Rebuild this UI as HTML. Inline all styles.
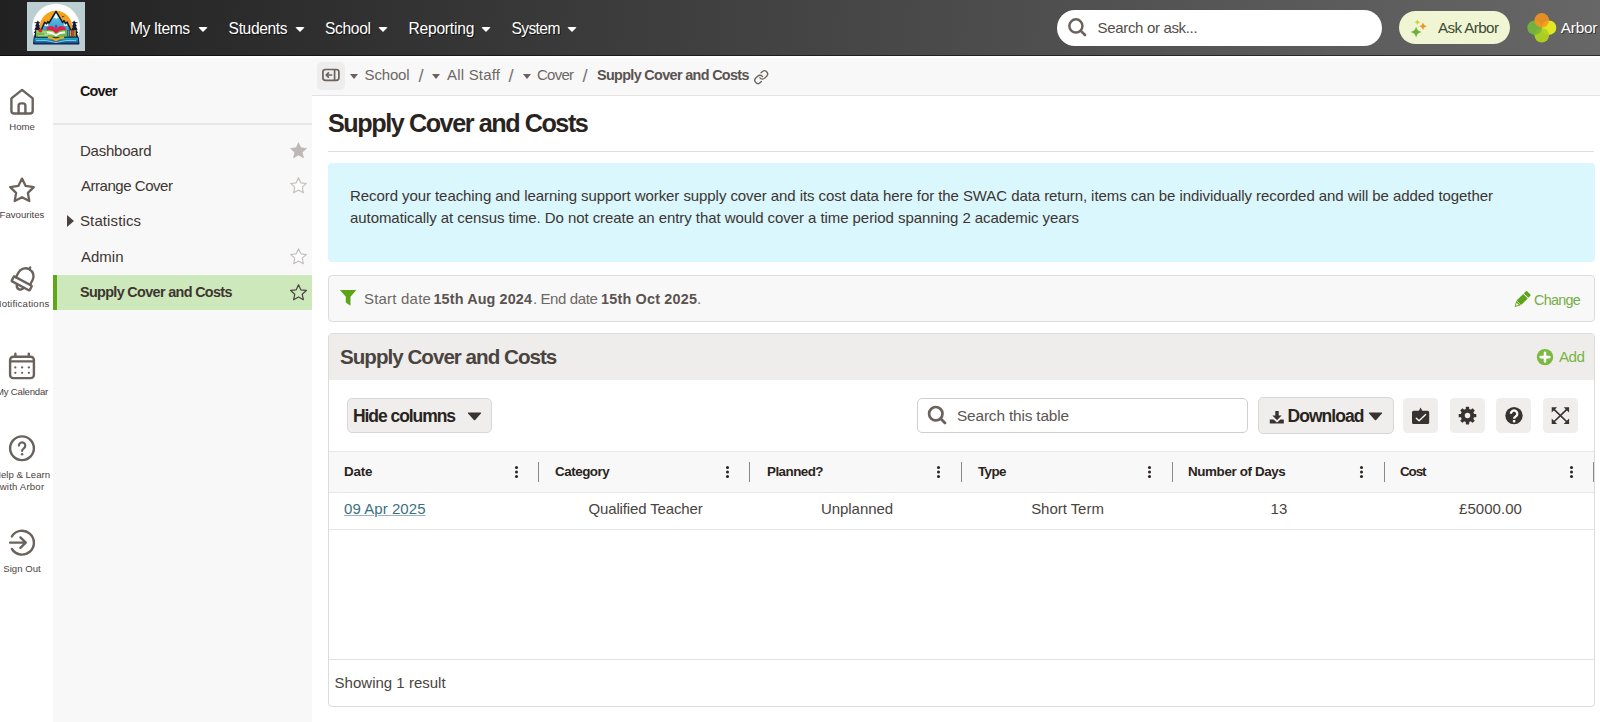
<!DOCTYPE html>
<html lang="en">
<head>
<meta charset="utf-8">
<title>Supply Cover and Costs</title>
<style>
*{box-sizing:border-box;margin:0;padding:0}
html,body{width:1600px;height:722px;overflow:hidden;background:#fff}
body{font-family:"Liberation Sans",sans-serif;color:#3d3531;position:relative;font-size:15px}
.abs{position:absolute;white-space:nowrap}
svg{display:block}

/* ---------- top bar ---------- */
#topbar{position:absolute;left:0;top:0;width:1600px;height:56px;background:linear-gradient(93deg,#212121 0%,#676767 100%);border-bottom:1px solid rgba(0,0,0,.55)}
#logo{position:absolute;left:27px;top:1.5px;width:58px;height:49.3px;background:#bbcfd3;overflow:hidden}
.nav{position:absolute;top:18px;height:22px;line-height:22px;font-size:15.6px;color:#fff;text-shadow:1px 1px 0 #111;white-space:nowrap}
.nav i{position:absolute;top:9px;width:0;height:0;border-left:5px solid transparent;border-right:5px solid transparent;border-top:5px solid #fff;border-radius:2px}
#gsearch{position:absolute;left:1057px;top:10px;width:325px;height:36px;border-radius:18px;background:#fff}
#gsearch span{position:absolute;left:41px;top:0;line-height:36px;font-size:15px;color:#544d49}
#ask{position:absolute;left:1399px;top:11px;width:111px;height:33px;border-radius:17px;background:#f0f5d3}
#ask span{position:absolute;left:39px;top:0;line-height:33px;font-size:15.2px;color:#3d4a35}
#arbor{position:absolute;left:1561px;top:17px;line-height:22px;font-size:15.4px;color:#fff;text-shadow:1px 1px 0 #333}

/* ---------- icon rail ---------- */
#rail{position:absolute;left:0;top:56px;width:53px;height:666px;background:#fff;overflow:hidden}
.rl{position:absolute;left:-19px;width:82px;text-align:center;font-size:9.6px;line-height:12px;color:#4a423f;white-space:nowrap}
.ri{position:absolute}
#r3{letter-spacing:.2px}#r4{letter-spacing:-.22px}#r7{letter-spacing:.19px}

/* ---------- side menu ---------- */
#side{position:absolute;left:53px;top:56px;width:259px;height:666px;background:#f8f8f8}
#side::before,#crumbs::before{content:"";position:absolute;left:0;top:0;width:100%;height:2px;background:#fff}
#side .hd{position:absolute;left:28px;top:25px;font-weight:bold;font-size:14.4px;line-height:20px;color:#1c1613}
#side .dv{position:absolute;left:0;top:67px;width:259px;height:2px;background:#e9e7e6}
.mi{position:absolute;left:0;width:259px;height:35px;line-height:35px;padding-left:28px;font-size:15px;color:#3d3531;white-space:nowrap}
.mi.sel{background:#cde8bb;font-weight:bold;border-left:4px solid #5fa61a;padding-left:24px;font-size:14.4px}
.mi svg{position:absolute;left:237px;top:9.7px}
.mi.sel svg{left:233px}
.tri{position:absolute;left:14px;top:12px;width:0;height:0;border-top:6.2px solid transparent;border-bottom:6.2px solid transparent;border-left:7px solid #4a4440}

/* ---------- main ---------- */
#crumbs{position:absolute;left:312px;top:56px;width:1288px;height:40px;background:#f8f8f8;border-bottom:1px solid #e3e3e3}
#crumbs .b{position:absolute;left:5px;top:6px;width:28px;height:28px;border-radius:5px;background:#eeeded}
.cr{position:absolute;top:9px;line-height:20px;font-size:15px;color:#6d6764;white-space:nowrap}
.cr.sl{font-size:18.5px;top:9.5px;color:#7a7471;margin-left:.4px}
.cr.bd{font-weight:bold;color:#5a5350;font-size:14.4px}
.ct{position:absolute;top:18px;width:0;height:0;border-left:4.8px solid transparent;border-right:4.8px solid transparent;border-top:5px solid #6b625d}
h1{position:absolute;left:329px;top:107px;font-size:25.2px;line-height:32px;font-weight:bold;color:#2a2421;white-space:nowrap}
#hr{position:absolute;left:328px;top:151px;width:1266px;height:1px;background:#dedede}
#info{position:absolute;left:328px;top:163px;width:1267px;height:99px;border-radius:4px;background:#d9f7fd}
#info p{position:absolute;left:23px;top:22px;width:1200px;font-size:15px;line-height:22px;color:#3d3531;white-space:nowrap}
#filter{position:absolute;left:328px;top:275px;width:1267px;height:47px;border:1px solid #dcdcdc;border-radius:4px;background:#f8f8f8}
#filter .t{position:absolute;left:36px;top:12px;line-height:22px;font-size:15px;color:#6d6764;white-space:nowrap}
#filter .t b{color:#5a5350;font-size:14.4px}
#filter .chg{position:absolute;left:1206px;top:13px;line-height:22px;font-size:14.4px;color:#76ad45}

#panel{position:absolute;left:328px;top:333px;width:1267px;height:374px;border:1px solid #dcdcdc;border-radius:4px;background:#fff;overflow:hidden}
#phd{position:absolute;left:0;top:0;width:1265px;height:46px;background:#efedec}
#phd .tt{position:absolute;left:12px;top:9px;line-height:28px;font-size:20.6px;font-weight:bold;color:#4a4440;white-space:nowrap}
#phd .add{position:absolute;left:1231px;top:12px;line-height:22px;font-size:15.2px;color:#78b545}
.btn{position:absolute;top:64px;height:35px;border:1px solid #d9d7d5;border-radius:5px;background:#efeeec;font-weight:bold;font-size:17.5px;line-height:34px;color:#2a2421;white-space:nowrap}
.ib{position:absolute;top:64px;width:35px;height:35px;border-radius:4.5px;background:#efeeec}
#tsearch{position:absolute;left:588px;top:64px;width:331px;height:35px;border:1px solid #cfcfcf;border-radius:5px;background:#fff}
#tsearch span{position:absolute;left:40px;top:0;line-height:33px;font-size:15.4px;color:#5c5652}
#thead{position:absolute;left:0;top:117px;width:1265px;height:42px;background:#f8f8f8;border-top:1px solid #e6e6e6;border-bottom:1px solid #e6e6e6}
.th{position:absolute;top:10px;line-height:20px;font-size:13.4px;font-weight:bold;color:#2a2421;white-space:nowrap}
.sep{position:absolute;top:10px;width:1px;height:20px;background:#8d8885}
.dots{position:absolute;top:14px;width:3px;height:3px;border-radius:50%;background:#2a2421;box-shadow:0 4.5px 0 #2a2421,0 9px 0 #2a2421}
#row{position:absolute;left:0;top:159px;width:1265px;height:37px;border-bottom:1px solid #e6e6e6}
.td{position:absolute;top:5px;line-height:22px;font-size:15px;color:#4a4440;white-space:nowrap}
.td.c{text-align:center;width:211px}
.td a{color:#3b7082;text-decoration:underline;text-decoration-color:#9db3ba;text-decoration-thickness:1px}
#foot{position:absolute;left:0;top:325px;width:1265px;height:48px;border-top:1px solid #e3e3e3}
#foot span{position:absolute;left:6px;top:12px;line-height:22px;font-size:15px;color:#4a4440}
</style>
<style id="fit">
#n1{letter-spacing:-0.464px;margin-left:-1.00px}
#n2{letter-spacing:-0.366px;margin-left:-0.40px}
#n3{letter-spacing:-0.338px;margin-left:-1.00px}
#n4{letter-spacing:-0.203px;margin-left:-0.60px}
#n5{letter-spacing:-0.600px;margin-left:-0.60px}
#gst{letter-spacing:-0.337px;margin-left:-0.40px}
#askt{letter-spacing:-0.605px;margin-left:0.00px}
#arbor{letter-spacing:-0.285px;margin-left:-0.20px}
#shd{letter-spacing:-0.824px;margin-left:-1.00px}
#m1{letter-spacing:-0.234px;margin-left:-1.00px}
#m2{letter-spacing:-0.463px;margin-left:0.00px}
#m3{letter-spacing:0.108px;margin-left:-1.00px}
#m4{letter-spacing:-0.008px;margin-left:0.00px}
#m5{letter-spacing:-0.659px;margin-left:-1.00px}
#c1{letter-spacing:-0.175px;margin-left:-0.40px}
#c2{letter-spacing:0.197px;margin-left:0.00px}
#c3{letter-spacing:-0.754px;margin-left:-1.00px}
#c4{letter-spacing:-0.659px;margin-left:0.00px}
#h1{letter-spacing:-1.440px;margin-left:-1.00px}
#l1{letter-spacing:-0.071px;margin-left:-1.00px}
#l2{letter-spacing:-0.067px;margin-left:-1.00px}
#f1{letter-spacing:0.203px;margin-left:-1.00px}
#f2{letter-spacing:0.121px;margin-left:-0.50px}
#f3{letter-spacing:-0.406px;margin-left:1.00px}
#f4{letter-spacing:0.200px;margin-left:-1.00px}
#chg{letter-spacing:-0.724px;margin-left:-1.00px}
#ptt{letter-spacing:-0.988px;margin-left:-1.00px}
#add{letter-spacing:-0.516px;margin-left:-1.00px}
#hct{letter-spacing:-1.064px;margin-left:-2.00px}
#tst{letter-spacing:-0.166px;margin-left:-1.00px}
#dlt{letter-spacing:-0.959px;margin-left:-1.50px}
#th1{letter-spacing:-0.177px;margin-left:-1.00px}
#th2{letter-spacing:-0.472px;margin-left:-1.00px}
#th3{letter-spacing:-0.538px;margin-left:0.00px}
#th4{letter-spacing:-0.588px;margin-left:0.00px}
#th5{letter-spacing:-0.379px;margin-left:-1.00px}
#th6{letter-spacing:-1.088px;margin-left:0.00px}
#td1{letter-spacing:0.059px;margin-left:-1.00px}
#td2{letter-spacing:-0.138px;margin-left:0.00px}
#td3{letter-spacing:-0.040px;margin-left:1.00px}
#td4{letter-spacing:-0.039px;margin-left:0.00px}
#td5{letter-spacing:0.062px;margin-left:1.00px}
#td6{letter-spacing:0.024px;margin-left:0.00px}
#ftt{letter-spacing:0.006px;margin-left:-0.40px}
</style>
</head>
<body>

<div id="topbar">
  <div id="logo"><svg width="58" height="50" viewBox="27 1 58 50" style="margin-top:-1px">
<defs><linearGradient id="mg" x1="0" y1="0" x2="0" y2="1"><stop offset="0" stop-color="#6fd0e8"/><stop offset="1" stop-color="#1f86c0"/></linearGradient>
<linearGradient id="bg2" x1="0" y1="0" x2="0" y2="1"><stop offset="0" stop-color="#2fb6c6"/><stop offset="0.55" stop-color="#1b7fb3"/><stop offset="1" stop-color="#15306e"/></linearGradient></defs>
<rect x="27" y="1" width="58" height="50" fill="#bbcfd3"/>
<clipPath id="lc"><rect x="27" y="1" width="58" height="41"/></clipPath><circle cx="56" cy="27.6" r="23.9" fill="#fff" clip-path="url(#lc)"/>
<circle cx="56" cy="27" r="16.2" fill="#f5a31d"/>
<path d="M38 20.5 l1.6 3 l-1 0 l1.6 3 l-1.1 0 l1.8 3.4 l-1.2 0 l1.6 3.4 l-1 4 h-6.5 l1.2 -4.4 l-1.2 0 l1.8 -3.2 l-1.4 0 l2 -3.4 l-1.2 0 l1.6 -3 l-1 0 z M74 20.5 l-1.6 3 l1 0 l-1.6 3 l1.1 0 l-1.8 3.4 l1.2 0 l-1.6 3.4 l1 4 h6.5 l-1.2 -4.4 l1.2 0 l-1.8 -3.2 l1.4 0 l-2 -3.4 l1.2 0 l-1.6 -3 l1 0 z" fill="#161b33"/>
<path d="M34.6 22.6 h5.4 M72 22.6 h5.4" stroke="#161b33" stroke-width="0.8"/>
<path d="M61.5 15.6 l1.6 0.9 l1.8 -1 l-1.4 1.6 l-1 0.1 z" fill="#161b33"/>
<path d="M38 37.5 L44.6 22.2 L46.6 24 L47.8 21.6 L49 23 L56 11.3 L62.6 22.4 L64 20.6 L65.6 23.6 L67.2 22 L74 37.5 Z" fill="url(#mg)" stroke="#141a35" stroke-width="1.5" stroke-linejoin="round"/>
<path d="M56 13.6 L53.2 18.4 L55 17.6 L56.2 19.2 L57.6 17.6 L59 18.6 Z" fill="#fff"/>
<path d="M45 23.8 l1.6 1.2 l1 -1.6 l0.8 2.6 l-3.8 0 z M66.8 23.6 l-1.2 1.4 l-1.4 -1.8 l-0.6 2.4 l3.6 0.4 z" fill="#fff"/>
<rect x="36" y="30" width="40" height="7.2" fill="#6cbb47"/>
<path d="M37 32 h18 M44 34.2 h14 M38 36 h10" stroke="#c8eaa4" stroke-width="1"/>
<path d="M56 24.2 l1.3 2.6 l-1.3 2 l-1.3 -2 z" fill="#6a35b5"/>
<path d="M46.8 27.6 Q51.6 24 56 29 Q60.4 24 65.4 27.6 L65.8 30.4 Q60.4 28.8 56 33.4 Q51.6 28.8 46.4 30.4 Z" fill="#e01f4b"/>
<path d="M47 31.6 Q52 30.8 56 34.8 Q60 30.8 65 31.6 L65 33.6 Q60 33 56 36.6 Q52 33 47 33.6 Z" fill="#fff"/>
<circle cx="40.3" cy="30.7" r="1.9" fill="#e0222f"/>
<rect x="67.4" y="30" width="7.8" height="6.6" fill="#1b2140"/>
<rect x="67.8" y="30.3" width="1.6" height="6" fill="#3d9be0"/><rect x="69.9" y="30.3" width="1.5" height="6" fill="#f39a1e"/><rect x="71.9" y="30.3" width="1.4" height="6" fill="#e23b2e"/><rect x="73.6" y="30.3" width="1.2" height="6" fill="#e8a21c"/>
<path d="M34.2 37.2 H48 Q52.5 37.6 56 40.8 Q59.5 37.6 64 37.2 H78.2 L79 44 H33.6 Z" fill="url(#bg2)" stroke="#141a4a" stroke-width="1" stroke-linejoin="round"/>
<path d="M48 36.4 Q52.6 36.2 56 39.4 Q59.4 36.2 64 36.4 L64.2 38.6 Q59.6 38.4 56 41.4 Q52.4 38.4 47.8 38.6 Z" fill="#f6a81c"/>
<path d="M36 40.6 Q46 39.4 56 42.6 Q66 39.4 76 40.6" stroke="#8fe0ea" stroke-width="0.8" fill="none"/>
</svg></div>
  <div class="nav" style="left:131px"><span id="n1">My Items</span><i style="left:67px"></i></div>
  <div class="nav" style="left:229px"><span id="n2">Students</span><i style="left:66px"></i></div>
  <div class="nav" style="left:326px"><span id="n3">School</span><i style="left:52px"></i></div>
  <div class="nav" style="left:409px"><span id="n4">Reporting</span><i style="left:72px"></i></div>
  <div class="nav" style="left:512px"><span id="n5">System</span><i style="left:55px"></i></div>
  <div id="gsearch"><svg style="position:absolute;left:10px;top:7px" width="22" height="22" viewBox="1067 17 22 22"><circle cx="1075.9" cy="25.9" r="6.55" fill="none" stroke="#6b625d" stroke-width="2.5"/><path d="M1080.8 30.8 L1085 35" stroke="#6b625d" stroke-width="2.6" stroke-linecap="round"/></svg><span id="gst">Search or ask...</span></div>
  <div id="ask"><svg style="position:absolute;left:8px;top:6px" width="24" height="24" viewBox="1407 17 24 24"><path d="M1416.1 26.4 Q1416.98 31.02 1421.6 31.9 Q1416.98 32.78 1416.1 37.4 Q1415.2199999999998 32.78 1410.6 31.9 Q1415.2199999999998 31.02 1416.1 26.4Z" fill="#6ab23b"/><path d="M1423 22.3 Q1423.64 25.66 1427 26.3 Q1423.64 26.94 1423 30.3 Q1422.36 26.94 1419 26.3 Q1422.36 25.66 1423 22.3Z" fill="#f5912c"/><path d="M1417.4 19.6 Q1417.832 21.868000000000002 1420.1000000000001 22.3 Q1417.832 22.732 1417.4 25.0 Q1416.968 22.732 1414.7 22.3 Q1416.968 21.868000000000002 1417.4 19.6Z" fill="#c5d92d"/></svg><span id="askt">Ask Arbor</span></div>
  <svg id="arblogo" style="position:absolute;left:1526px;top:12px" width="32" height="32" viewBox="1526 12 32 32"><circle cx="1549" cy="27.7" r="7.3" fill="#dfe822"/><circle cx="1541.8" cy="35.3" r="7.3" fill="#b0d51e" fill-opacity="0.92"/><circle cx="1534.6" cy="27.7" r="7.3" fill="#76b83a" fill-opacity="0.9"/><circle cx="1541.8" cy="20.3" r="7.3" fill="#f7941d" fill-opacity="0.88"/></svg>
  <div id="arbor">Arbor</div>
</div>

<div id="rail">
<svg class="ri" style="left:0;top:0" width="53" height="666" viewBox="0 56 53 666" fill="none" stroke="#6b625d" stroke-width="2.4" stroke-linecap="round" stroke-linejoin="round">
<path d="M11.4 98.4 L22.05 89.9 L32.7 98.4 V110.7 Q32.7 113.5 29.9 113.5 H14.2 Q11.4 113.5 11.4 110.7 Z"/>
<path d="M18.6 113.3 V105.8 Q18.6 103.4 21 103.4 H23 Q25.4 103.4 25.4 105.8 V113.3"/>
<polygon points="22.00,178.60 25.64,185.98 33.79,187.17 27.90,192.92 29.29,201.03 22.00,197.20 14.71,201.03 16.10,192.92 10.21,187.17 18.36,185.98" stroke-width="2.3"/>
<g transform="translate(1.6 0.4) rotate(28 22.8 278)" stroke-width="2.4"><path d="M22.8 265.6 V267.4"/><path d="M14.8 281 V275.6 a8 8 0 0 1 16 0 V281"/><rect x="12.6" y="281" width="20.4" height="5.4" rx="0.8"/><path d="M19.2 286.6 a3.6 3.6 0 0 0 7.2 0"/></g>
<rect x="10.1" y="356.7" width="23.8" height="21.4" rx="3.2"/><path d="M10.1 361.4 H33.9 M15.4 353.6 V356.5 M28.8 353.6 V356.5"/>
<g fill="#6b625d" stroke="none"><circle cx="15.3" cy="367.4" r="1.15"/><circle cx="22.1" cy="367.4" r="1.15"/><circle cx="28.9" cy="367.4" r="1.15"/><circle cx="15.3" cy="372.8" r="1.15"/><circle cx="22.1" cy="372.8" r="1.15"/><circle cx="28.9" cy="372.8" r="1.15"/></g>
<circle cx="22" cy="448.25" r="11.9"/>
<path d="M18.9 445.6 a3.2 3.2 0 1 1 4.9 2.7 c-1.2 0.8 -1.7 1.4 -1.7 2.7" stroke-width="2.2"/><circle cx="22.1" cy="454.2" r="1.3" fill="#6b625d" stroke="none"/>
<path d="M11.9 536.4 A11.9 11.9 0 1 1 11.9 549"/><path d="M10.1 542.6 H25.8 M20.4 537.4 L25.8 542.6 L20.4 547.8"/>
</svg>
  <div class="rl" style="top:65px"><span id="r1">Home</span></div>
  <div class="rl" style="top:153px"><span id="r2">Favourites</span></div>
  <div class="rl" style="top:242px"><span id="r3">Notifications</span></div>
  <div class="rl" style="top:330px"><span id="r4">My Calendar</span></div>
  <div class="rl" style="top:413px"><span id="r5">Help &amp; Learn</span><br><span id="r7">with Arbor</span></div>
  <div class="rl" style="top:507px"><span id="r6">Sign Out</span></div>
</div>

<div id="side">
  <div class="hd" id="shd">Cover</div>
  <div class="dv"></div>
  <div class="mi" style="top:77px"><span id="m1">Dashboard</span><svg width="17" height="17" style="top:9px"><polygon points="8.50,0.70 10.79,5.84 16.39,6.44 12.21,10.21 13.38,15.71 8.50,12.90 3.62,15.71 4.79,10.21 0.61,6.44 6.21,5.84" fill="#bdb8b6" stroke="#bdb8b6" stroke-width="0.8" stroke-linejoin="round"/></svg></div>
  <div class="mi" style="top:112px"><span id="m2">Arrange Cover</span><svg width="17" height="17" style="top:9px"><polygon points="8.50,0.70 10.79,5.84 16.39,6.44 12.21,10.21 13.38,15.71 8.50,12.90 3.62,15.71 4.79,10.21 0.61,6.44 6.21,5.84" fill="#fff" stroke="#c2bdbb" stroke-width="1.1" stroke-linejoin="round"/></svg></div>
  <div class="mi" style="top:147px"><span id="m3">Statistics</span><i class="tri"></i></div>
  <div class="mi" style="top:183px"><span id="m4">Admin</span><svg width="17" height="17" style="top:9px"><polygon points="8.50,0.70 10.79,5.84 16.39,6.44 12.21,10.21 13.38,15.71 8.50,12.90 3.62,15.71 4.79,10.21 0.61,6.44 6.21,5.84" fill="#fff" stroke="#c2bdbb" stroke-width="1.1" stroke-linejoin="round"/></svg></div>
  <div class="mi sel" style="top:218.6px;height:35.3px;line-height:35px"><span id="m5">Supply Cover and Costs</span><svg width="17" height="17" style="top:9px"><polygon points="8.50,0.70 10.79,5.84 16.39,6.44 12.21,10.21 13.38,15.71 8.50,12.90 3.62,15.71 4.79,10.21 0.61,6.44 6.21,5.84" fill="none" stroke="#4a4440" stroke-width="1.2" stroke-linejoin="round"/></svg></div>
</div>

<div id="crumbs">
  <div class="b"><svg width="28" height="28" viewBox="317 62 28 28" fill="none" stroke="#6b625d" stroke-width="1.7" stroke-linecap="round" stroke-linejoin="round"><rect x="322.9" y="69.5" width="16" height="10.9" rx="2.6"/><path d="M334.6 69.8 V80.2 M326.3 75 H331.6 M328.4 72.8 L326.2 75 L328.4 77.2"/></svg></div>
  <i class="ct" style="left:38px"></i><div class="cr" id="c1" style="left:53px">School</div>
  <div class="cr sl" id="s1" style="left:106px">/</div>
  <i class="ct" style="left:120px"></i><div class="cr" id="c2" style="left:135px">All Staff</div>
  <div class="cr sl" id="s2" style="left:196px">/</div>
  <i class="ct" style="left:211px"></i><div class="cr" id="c3" style="left:226px">Cover</div>
  <div class="cr sl" id="s3" style="left:270px">/</div>
  <div class="cr bd" id="c4" style="left:285px">Supply Cover and Costs</div>
  <svg style="position:absolute;left:441px;top:13px" width="17" height="17" viewBox="753 69 17 17" fill="none" stroke="#6b625d" stroke-width="2.1" stroke-linecap="round" stroke-linejoin="round"><g transform="translate(753.55 69.5) scale(0.638)"><path d="M10 13a5 5 0 0 0 7.54.54l3-3a5 5 0 0 0-7.07-7.07l-1.72 1.71"/><path d="M14 11a5 5 0 0 0-7.54-.54l-3 3a5 5 0 0 0 7.07 7.07l1.71-1.71"/></g></svg>
</div>

<h1 id="h1">Supply Cover and Costs</h1>
<div id="hr"></div>

<div id="info"><p><span id="l1">Record your teaching and learning support worker supply cover and its cost data here for the SWAC data return, items can be individually recorded and will be added together</span><br><span id="l2">automatically at census time. Do not create an entry that would cover a time period spanning 2 academic years</span></p></div>

<div id="filter">
  <svg style="position:absolute;left:10px;top:13px" width="18" height="18" viewBox="339 289 18 18"><path d="M339.9 289.9 H356.4 L350.5 296.8 V305.8 L345.8 302.5 V296.8 Z" fill="#5ea418"/></svg>
  <div class="t" id="ft"><span id="f1" style="position:absolute;left:0">Start date </span><b id="f2" style="position:absolute;left:69px">15th Aug 2024</b><span id="f3" style="position:absolute;left:167px">. End date </span><b id="f4" style="position:absolute;left:237px">15th Oct 2025</b><span id="f5" style="position:absolute;left:332px">.</span></div>
  <svg style="position:absolute;left:1184px;top:14px" width="19" height="19" viewBox="1513 290 19 19"><g transform="rotate(45 1521.7 299.9)" fill="#5ea418"><path d="M1518.50 293.70 V291.10 Q1518.50 289.90 1519.70 289.90 H1523.70 Q1524.90 289.90 1524.90 291.10 V293.70 Z"/><rect x="1518.50" y="294.60" width="6.4" height="9.30"/><path d="M1518.50 304.30 H1524.90 L1521.7 309.90 Z"/><path d="M1520.10 305.50 H1523.30 L1521.7 308.10 Z" fill="#f8f8f8"/></g></svg>
  <div class="chg" id="chg">Change</div>
</div>

<div id="panel">
  <div id="phd"><div class="tt" id="ptt">Supply Cover and Costs</div><svg style="position:absolute;left:1207px;top:14px" width="18" height="18" viewBox="1536 348 18 18"><circle cx="1545" cy="357.1" r="8.2" fill="#7ab83f"/><path d="M1540.6 357.1 H1549.4 M1545 352.7 V361.5" stroke="#fff" stroke-width="2.6" stroke-linecap="round"/></svg><div class="add" id="add">Add</div></div>
  <div class="btn" id="hide" style="left:18px;width:145px;padding-left:7px"><span id="hct">Hide columns</span><svg style="position:absolute;left:119px;top:13px" width="15" height="9" viewBox="0 0 15 9"><path d="M1.6 0.4 H13.4 Q14.8 0.4 13.9 1.5 L8.2 7.9 Q7.5 8.6 6.8 7.9 L1.1 1.5 Q0.2 0.4 1.6 0.4 Z" fill="#3a322f"/></svg></div>
  <div id="tsearch"><svg style="position:absolute;left:9px;top:6px" width="22" height="22" viewBox="927 405 22 22"><circle cx="935.8" cy="413.7" r="6.7" fill="none" stroke="#6b625d" stroke-width="2.7"/><path d="M940.8 418.8 L945 423" stroke="#6b625d" stroke-width="2.8" stroke-linecap="round"/></svg><span id="tst">Search this table</span></div>
  <div class="btn" id="dl" style="left:929px;width:136px;padding-left:30px;top:63px;height:37px;line-height:36px"><svg style="position:absolute;left:10px;top:12px" width="16" height="14" viewBox="1269 410 16 14"><path d="M1275.3 411 H1278.7 V415.6 H1281.6 L1277 420.2 L1272.4 415.6 H1275.3 Z" fill="#3a322f"/><path d="M1269.8 419.6 H1273.6 L1277 422.4 L1280.4 419.6 H1283.8 V423.4 H1269.8 Z" fill="#3a322f"/></svg><span id="dlt">Download</span><svg style="position:absolute;left:109px;top:14px" width="15" height="9" viewBox="0 0 15 9"><path d="M1.6 0.4 H13.4 Q14.8 0.4 13.9 1.5 L8.2 7.9 Q7.5 8.6 6.8 7.9 L1.1 1.5 Q0.2 0.4 1.6 0.4 Z" fill="#3a322f"/></svg></div>
  <div class="ib" style="left:1074px"><svg width="35" height="35" viewBox="1403 398 35 35"><path d="M1413.6 410.8 H1418.9 L1420.6 407.4 L1422.3 410.8 H1427.6 Q1429.2 410.8 1429.2 412.4 V422.4 Q1429.2 424 1427.6 424 H1413.6 Q1412 424 1412 422.4 V412.4 Q1412 410.8 1413.6 410.8 Z" fill="#3a322f"/><path d="M1416.3 418.2 L1419.1 420.8 L1425.6 414.6" fill="none" stroke="#fff" stroke-width="1.4" stroke-linecap="round" stroke-linejoin="round"/></svg></div>
  <div class="ib" style="left:1121px"><svg width="35" height="35" viewBox="1450 398 35 35"><rect x="1465.8" y="406.8" width="3.4" height="4" rx="0.6" transform="rotate(0 1467.5 415.6)" fill="#3a322f"/><rect x="1465.8" y="406.8" width="3.4" height="4" rx="0.6" transform="rotate(45 1467.5 415.6)" fill="#3a322f"/><rect x="1465.8" y="406.8" width="3.4" height="4" rx="0.6" transform="rotate(90 1467.5 415.6)" fill="#3a322f"/><rect x="1465.8" y="406.8" width="3.4" height="4" rx="0.6" transform="rotate(135 1467.5 415.6)" fill="#3a322f"/><rect x="1465.8" y="406.8" width="3.4" height="4" rx="0.6" transform="rotate(180 1467.5 415.6)" fill="#3a322f"/><rect x="1465.8" y="406.8" width="3.4" height="4" rx="0.6" transform="rotate(225 1467.5 415.6)" fill="#3a322f"/><rect x="1465.8" y="406.8" width="3.4" height="4" rx="0.6" transform="rotate(270 1467.5 415.6)" fill="#3a322f"/><rect x="1465.8" y="406.8" width="3.4" height="4" rx="0.6" transform="rotate(315 1467.5 415.6)" fill="#3a322f"/><circle cx="1467.5" cy="415.6" r="4.75" fill="none" stroke="#3a322f" stroke-width="4"/></svg></div>
  <div class="ib" style="left:1167px"><svg width="35" height="35" viewBox="1496 398 35 35"><circle cx="1514" cy="415.6" r="8.7" fill="#3a322f"/><path d="M1510.9 413.7 a3.2 3.2 0 1 1 4.9 2.7 c-1.2 0.8 -1.7 1.3 -1.7 2.4" fill="none" stroke="#fff" stroke-width="2.3" stroke-linecap="butt"/><rect x="1512.9" y="420" width="2.4" height="2.4" fill="#fff"/></svg></div>
  <div class="ib" style="left:1214px"><svg width="35" height="35" viewBox="1543 398 35 35"><path d="M1553.2 408.7 L1567.6 422.5 M1567.6 408.7 L1553.2 422.5" stroke="#3a322f" stroke-width="1.7"/><path d="M1551.7 407.2 h5.4 l-5.4 5.4z M1569.1 407.2 v5.4 l-5.4 -5.4z M1569.1 424 h-5.4 l5.4 -5.4z M1551.7 424 v-5.4 l5.4 5.4z" fill="#3a322f"/></svg></div>
  <div id="thead">
    <div class="th" style="left:16px" id="th1">Date</div><i class="dots" style="left:185.5px"></i><i class="sep" style="left:209px"></i>
    <div class="th" style="left:227px" id="th2">Category</div><i class="dots" style="left:396.5px"></i><i class="sep" style="left:420px"></i>
    <div class="th" style="left:438px" id="th3">Planned?</div><i class="dots" style="left:607.5px"></i><i class="sep" style="left:632px"></i>
    <div class="th" style="left:649px" id="th4">Type</div><i class="dots" style="left:818.5px"></i><i class="sep" style="left:843px"></i>
    <div class="th" style="left:860px" id="th5">Number of Days</div><i class="dots" style="left:1030.5px"></i><i class="sep" style="left:1054.5px"></i>
    <div class="th" style="left:1071px" id="th6">Cost</div><i class="dots" style="left:1240.5px"></i><i class="sep" style="left:1264px"></i>
  </div>
  <div id="row">
    <div class="td" style="left:16px"><a id="td1">09 Apr 2025</a></div>
    <div class="td c" style="left:211px"><span id="td2">Qualified Teacher</span></div>
    <div class="td c" style="left:422px"><span id="td3">Unplanned</span></div>
    <div class="td c" style="left:633px"><span id="td4">Short Term</span></div>
    <div class="td c" style="left:844px"><span id="td5">13</span></div>
    <div class="td c" style="left:1056px"><span id="td6">£5000.00</span></div>
  </div>
  <div id="foot"><span id="ftt">Showing 1 result</span></div>
</div>

</body>
</html>
